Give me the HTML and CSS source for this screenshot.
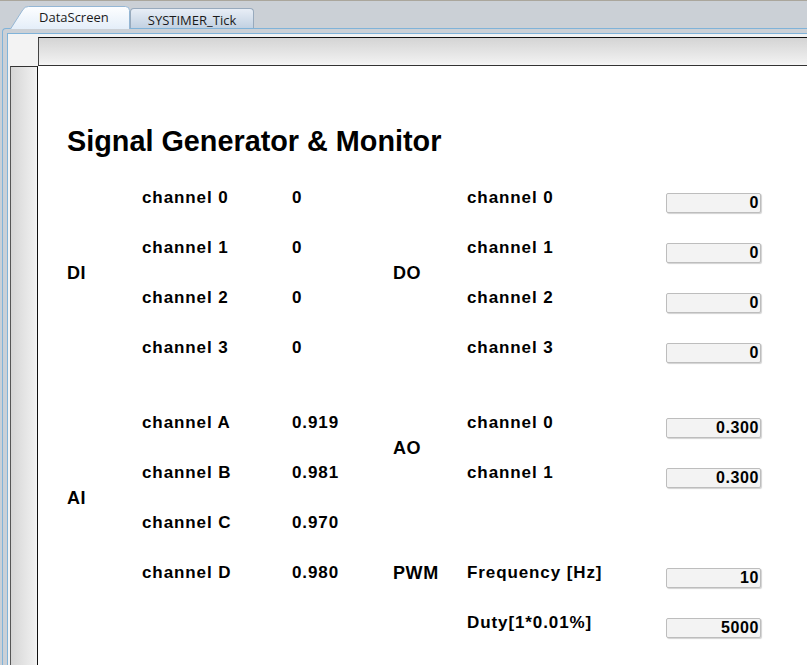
FILE: index.html
```html
<!DOCTYPE html>
<html>
<head>
<meta charset="utf-8">
<title>DataScreen</title>
<link rel="stylesheet" href="styles.css">
</head>
<body>
<div class="app">
  <div class="tabstrip">
    <div class="tab tab-active">
      <svg class="tab-shape" width="120" height="23" viewBox="0 0 120 23">
        <defs>
          <linearGradient id="tg" x1="0" y1="0" x2="0" y2="1">
            <stop offset="0" stop-color="#fdfeff"/>
            <stop offset="1" stop-color="#e4eef9"/>
          </linearGradient>
        </defs>
        <path d="M0.5 23 L13 3.5 Q14.8 0.5 18.5 0.5 H115.5 Q119.5 0.5 119.5 4.5 V23" fill="url(#tg)" stroke="#94b6d4"/>
      </svg>
      <span class="tab-label">DataScreen</span>
    </div>
    <div class="tab tab-idle"><span class="tab-label">SYSTIMER_Tick</span></div>
  </div>
  <div class="outer">
    <div class="inner">
      <div class="corner"></div>
      <div class="hruler"></div>
      <div class="vruler"></div>
      <div class="content">
        <h1 class="title">Signal Generator &amp; Monitor</h1>
        <div class="form">
          <div class="group g-di">DI</div>
          <div class="group g-do">DO</div>
          <div class="group g-ai">AI</div>
          <div class="group g-ao">AO</div>
          <div class="group g-pwm">PWM</div>

          <div class="c2">channel 0</div><div class="c3">0</div><div class="c5">channel 0</div><div class="box">0</div>
          <div class="c2">channel 1</div><div class="c3">0</div><div class="c5">channel 1</div><div class="box">0</div>
          <div class="c2">channel 2</div><div class="c3">0</div><div class="c5">channel 2</div><div class="box">0</div>
          <div class="c2">channel 3</div><div class="c3">0</div><div class="c5">channel 3</div><div class="box">0</div>

          <div class="spacer"></div>

          <div class="c2">channel A</div><div class="c3">0.919</div><div class="c5">channel 0</div><div class="box">0.300</div>
          <div class="c2">channel B</div><div class="c3">0.981</div><div class="c5">channel 1</div><div class="box">0.300</div>
          <div class="c2">channel C</div><div class="c3">0.970</div>
          <div class="c2">channel D</div><div class="c3">0.980</div><div class="c5">Frequency [Hz]</div><div class="box">10</div>
          <div class="c5">Duty[1*0.01%]</div><div class="box">5000</div>
        </div>
      </div>
    </div>
  </div>
</div>
</body>
</html>
```
FILE: styles.css
```css
html, body {
  margin: 0;
  padding: 0;
}
body {
  width: 807px;
  height: 665px;
  overflow: hidden;
  background: #cbd0d6;
  font-family: "Liberation Sans", Arial, sans-serif;
  color: #000;
}
.app {
  display: flex;
  flex-direction: column;
  height: 665px;
  box-sizing: border-box;
  border-top: 1px solid #aaa69c;
}
.tabstrip {
  height: 27px;
  flex: none;
  display: flex;
  align-items: flex-end;
  padding-left: 10px;
}
.tab {
  position: relative;
  box-sizing: border-box;
  font-family: "Open Sans", "Noto Sans", sans-serif;
  font-size: 13px;
  color: #1a1a1a;
}
.tab-active {
  width: 120px;
  height: 22px;
  padding: 1px 0 0 29px;
  z-index: 2;
}
.tab-shape {
  position: absolute;
  left: 0;
  top: 0;
}
.tab-active .tab-label {
  position: relative;
  display: block;
  line-height: 20px;
}
.tab-idle {
  width: 124px;
  height: 20px;
  border: 1px solid #98aabd;
  border-bottom: none;
  border-radius: 4px 4px 0 0;
  background: linear-gradient(#e8eef6, #c2d1e2);
  text-align: center;
  padding-top: 3px;
}
.tab-idle .tab-label {
  display: block;
  line-height: 17px;
}
.outer {
  flex: 1;
  display: flex;
  margin-left: 2px;
  border: 1px solid #80b3d9;
  border-right: none;
  border-bottom: none;
  border-top-left-radius: 4px;
  padding: 4px 0 0 4px;
  background: #cbd0d6;
}
.inner {
  flex: 1;
  display: grid;
  grid-template-columns: 30px 1fr;
  grid-template-rows: 32px 1fr;
  border: 1px solid #80b3d9;
  border-right: none;
  border-bottom: none;
  background: #f1f2f3;
}
.corner {
  background: #f3f3f3;
}
.hruler {
  margin-top: 3px;
  border-top: 1px solid #111;
  border-left: 1px solid #444;
  border-bottom: 1px solid #333;
  background: linear-gradient(#d4d4d4, #f0f0f0 90%, #f6f6f6);
}
.vruler {
  margin-left: 2px;
  border-left: 1px solid #555;
  border-right: 1px solid #111;
  border-top: 1px solid #333;
  background: linear-gradient(90deg, #d5d5d5, #efefef 90%, #f5f5f5);
}
.content {
  background: #fff;
  padding: 61px 0 0 29px;
  overflow: hidden;
}
.title {
  margin: 0 0 17px;
  font-size: 28.8px;
  line-height: 29px;
  font-weight: bold;
}
.form {
  display: grid;
  grid-template-columns: 75px 150px 101px 74px 199px 95px;
  grid-template-rows: repeat(4, 50px) 25px repeat(5, 50px);
  align-items: center;
  font-size: 17px;
  font-weight: bold;
  letter-spacing: 0.9px;
  line-height: 20px;
  white-space: nowrap;
}
.group {
  font-size: 18px;
  letter-spacing: 0.6px;
}
.g-di { grid-column: 1; grid-row: 1 / 5; }
.g-do { grid-column: 4; grid-row: 1 / 5; }
.g-ai { grid-column: 1; grid-row: 6 / 10; }
.g-ao { grid-column: 4; grid-row: 6 / 8; }
.g-pwm { grid-column: 4; grid-row: 9; }
.c2 { grid-column: 2; }
.c3 { grid-column: 3; }
.c5 { grid-column: 5; }
.spacer { grid-column: 2 / 7; height: 25px; }
.box {
  grid-column: 6;
  margin-top: 10px;
  height: 20px;
  box-sizing: border-box;
  border: 1px solid #bdbdbd;
  border-radius: 2px;
  background: #f3f3f3;
  box-shadow: 1px 1px 1px rgba(0, 0, 0, 0.18);
  text-align: right;
  padding-right: 1px;
  font-size: 16px;
  letter-spacing: 0.6px;
  line-height: 18px;
}
```
